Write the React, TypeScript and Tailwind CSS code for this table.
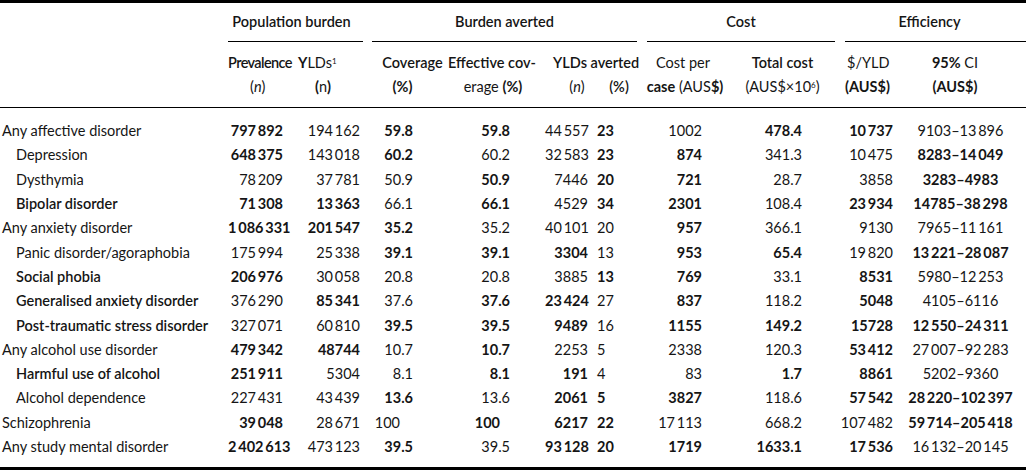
import React from "react";

const cols =
  "grid grid-cols-[228px_64px_76px_77px_100px_50px_42px_100px_103px_65px_121px]";

const cellCls = [
  "text-left",
  "text-right pr-[9px]",
  "text-right pr-[8px]",
  "text-right pr-[32px]",
  "text-right pr-[35px]",
  "text-right pr-[7px]",
  "text-left pl-[2px]",
  "text-right pr-[35px]",
  "text-right pr-[38px]",
  "text-right pr-[12px]",
  "text-center pr-[10px]",
];

type Row = { label: string; sub?: boolean; bold?: boolean; cells: string[] };

// "*" marks a value printed in the heavier weight
const rows: Row[] = [
  {
    label: "Any affective disorder",
    cells: ["*797 892", "194 162", "*59.8", "*59.8", "44 557", "*23", "1002", "*478.4", "*10 737", "9103–13 896"],
  },
  {
    label: "Depression",
    sub: true,
    cells: ["*648 375", "143 018", "*60.2", "60.2", "32 583", "*23", "*874", "341.3", "10 475", "*8283–14 049"],
  },
  {
    label: "Dysthymia",
    sub: true,
    cells: ["78 209", "37 781", "50.9", "*50.9", "7446", "*20", "*721", "28.7", "3858", "*3283–4983"],
  },
  {
    label: "Bipolar disorder",
    sub: true,
    bold: true,
    cells: ["*71 308", "*13 363", "66.1", "*66.1", "4529", "*34", "*2301", "108.4", "*23 934", "*14785–38 298"],
  },
  {
    label: "Any anxiety disorder",
    cells: ["*1 086 331", "*201 547", "*35.2", "35.2", "40 101", "20", "*957", "366.1", "9130", "7965–11 161"],
  },
  {
    label: "Panic disorder/agoraphobia",
    sub: true,
    cells: ["175 994", "25 338", "*39.1", "*39.1", "*3304", "13", "*953", "*65.4", "19 820", "*13 221–28 087"],
  },
  {
    label: "Social phobia",
    sub: true,
    bold: true,
    cells: ["*206 976", "30 058", "20.8", "20.8", "3885", "*13", "*769", "33.1", "*8531", "5980–12 253"],
  },
  {
    label: "Generalised anxiety disorder",
    sub: true,
    bold: true,
    cells: ["376 290", "*85 341", "37.6", "*37.6", "*23 424", "27", "*837", "118.2", "*5048", "4105–6116"],
  },
  {
    label: "Post-traumatic stress disorder",
    sub: true,
    bold: true,
    cells: ["327 071", "60 810", "*39.5", "*39.5", "*9489", "16", "*1155", "*149.2", "*15728", "*12 550–24 311"],
  },
  {
    label: "Any alcohol use disorder",
    cells: ["*479 342", "*48744", "10.7", "*10.7", "2253", "5", "2338", "120.3", "*53 412", "27 007–92 283"],
  },
  {
    label: "Harmful use of alcohol",
    sub: true,
    bold: true,
    cells: ["*251 911", "5304", "8.1", "*8.1", "*191", "4", "83", "*1.7", "*8861", "5202–9360"],
  },
  {
    label: "Alcohol dependence",
    sub: true,
    cells: ["227 431", "43 439", "*13.6", "13.6", "*2061", "*5", "*3827", "118.6", "*57 542", "*28 220–102 397"],
  },
  {
    label: "Schizophrenia",
    cells: ["*39 048", "28 671", "100", "*100", "*6217", "*22", "17 113", "668.2", "107 482", "*59 714–205 418"],
  },
  {
    label: "Any study mental disorder",
    cells: ["*2 402 613", "473 123", "*39.5", "39.5", "*93 128", "*20", "*1719", "*1633.1", "*17 536", "16 132–20 145"],
  },
];

function Value({ raw, col }: { raw: string; col: number }) {
  const bold = raw.startsWith("*");
  const text = (bold ? raw.slice(1) : raw).replace(/ /g, "\u2009");
  let shift = "";
  if (text === "100") {
    shift = col === 3 ? "mr-[13px]" : "mr-[10px]";
  }
  return (
    <span className={`inline-block ${shift} ${bold ? "font-bold" : "font-normal"}`}>
      {text}
    </span>
  );
}

export default function App() {
  return (
    <div
      className="w-[1026px] h-[476px] bg-white text-[#151515] text-[14.5px]"
      style={{ fontFamily: "Lato, 'Open Sans', sans-serif" }}
    >
      <div className="border-t-[3px] border-b-[3px] border-black">
        {/* group headings */}
        <div className={`${cols} h-[39px] items-end leading-[20px] font-semibold`}>
          <div />
          <div className="col-span-2 mr-[5px] border-b border-black pb-[9px] pr-[8px] text-center">
            Population burden
          </div>
          <div className="col-span-4 ml-[4px] border-b border-black pb-[9px] text-center">
            Burden averted
          </div>
          <div className="col-span-2 ml-[10px] mr-[5px] border-b border-black pb-[9px] text-center">
            Cost
          </div>
          <div className="col-span-2 ml-[5px] border-b border-black pb-[9px] pr-[12px] text-center">
            Efficiency
          </div>
        </div>

        {/* column headings */}
        <div className={`${cols} border-b border-black pt-[9px] pb-[8px] leading-[24px] whitespace-nowrap`}>
          <div />
          <div className="text-left">
            <div className="font-semibold tracking-[-0.6px]">Prevalence</div>
            <div className="pl-[22px]">
              (<i>n</i>)
            </div>
          </div>
          <div className="text-left pl-[6px]">
            <div>
              <b className="font-bold">Y</b>LDs<sup className="text-[8px]">1</sup>
            </div>
            <div className="font-bold pl-[17px]">
              (<span className="font-normal">n</span>)
            </div>
          </div>
          <div className="text-center">
            <div className="font-semibold pl-[12px]">Coverage</div>
            <div className="font-bold pr-[8px]">(%)</div>
          </div>
          <div className="col-span-3 grid grid-cols-[100px_50px_42px]">
            <div className="font-semibold pl-[3px]">Effective cov-</div>
            <div className="col-span-2 font-semibold pl-[8px]">YLDs averted</div>
            <div className="text-center pr-[4px]">
              erage <b className="font-bold">(%)</b>
            </div>
            <div className="text-center pl-[14px]">
              (<i>n</i>)
            </div>
            <div className="text-center pl-[6px] font-semibold">(%)</div>
          </div>
          <div className="text-center">
            <div className="pr-[8px]">Cost per</div>
            <div className="pr-[4px]">
              <b className="font-bold">case</b> (AUS<b className="font-bold">$)</b>
            </div>
          </div>
          <div className="text-center pr-[12px]">
            <div className="font-semibold">Total cost</div>
            <div>
              (AUS$×10<sup className="text-[8px]">6</sup>)
            </div>
          </div>
          <div className="text-left">
            <div className="pl-[7px]">$/YLD</div>
            <div className="font-bold pl-[5px]">(AUS$)</div>
          </div>
          <div className="text-center pr-[21px]">
            <div>
              <b className="font-bold">95%</b> CI
            </div>
            <div className="font-bold">(AUS$)</div>
          </div>
        </div>

        {/* body */}
        <div className="pt-[11px] pb-[8px]">
          {rows.map((r) => (
            <div key={r.label} className={`${cols} h-[24.3px] items-center leading-[24px]`}>
              <div
                className={`${r.sub ? "pl-[16px]" : "pl-[2px]"} ${r.bold ? "font-semibold" : "font-normal"} whitespace-nowrap`}
              >
                {r.label}
              </div>
              {r.cells.map((c, i) => (
                <div key={i} className={`${cellCls[i + 1]} whitespace-nowrap`}>
                  <Value raw={c} col={i + 1} />
                </div>
              ))}
            </div>
          ))}
        </div>
      </div>
    </div>
  );
}
